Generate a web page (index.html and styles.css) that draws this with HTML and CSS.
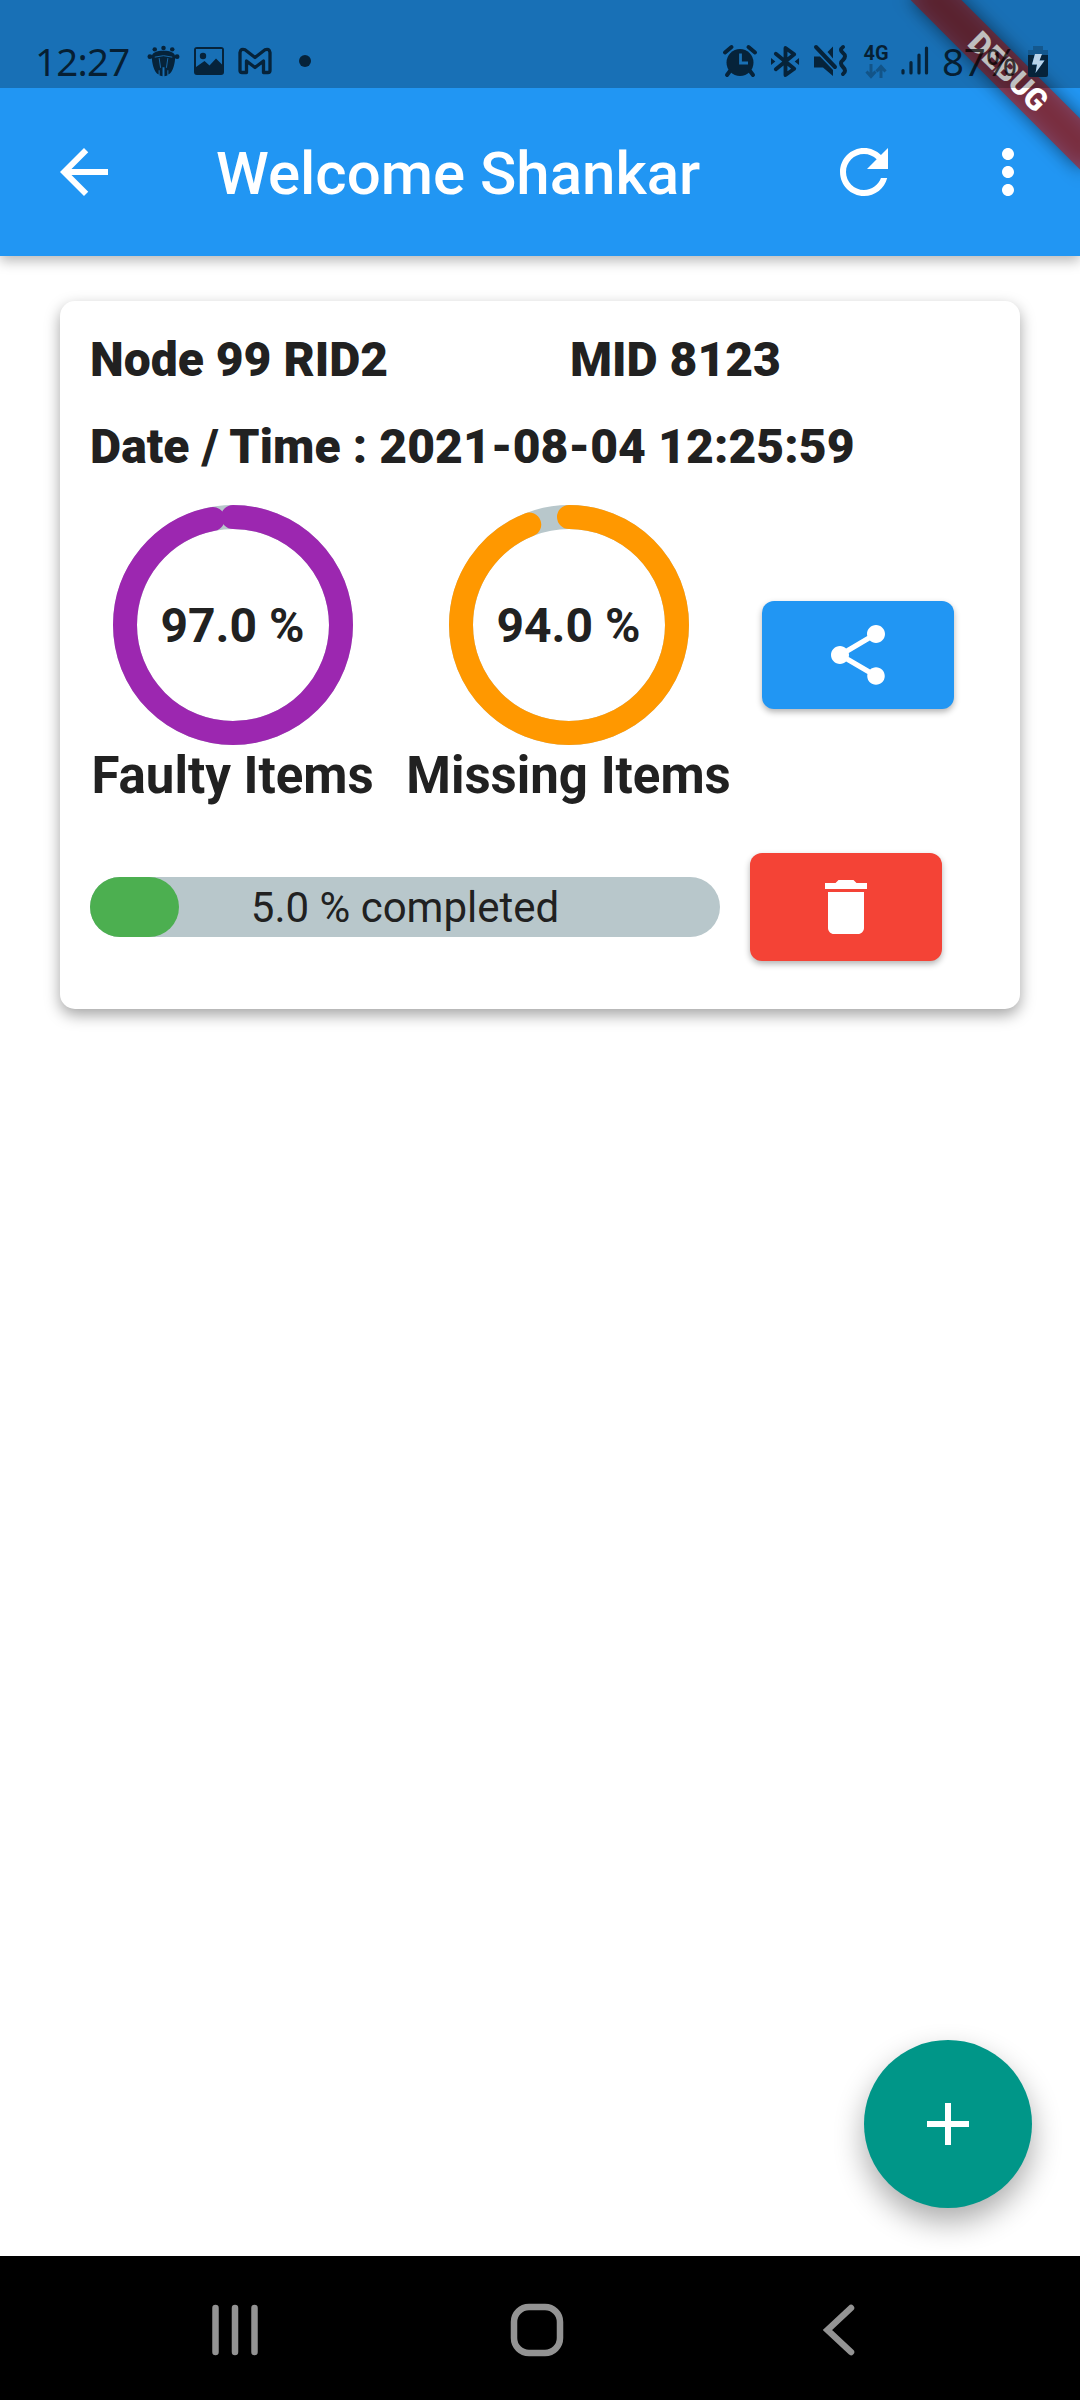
FILE: index.html
```html
<!DOCTYPE html>
<html lang="en">
<head>
<meta charset="utf-8">
<title>Welcome Shankar</title>
<link rel="stylesheet" href="styles.css">
</head>
<body>
<div class="screen">
  <header class="app-bar">
    <svg class="icon back" viewBox="0 0 24 24"><path d="M20 11H7.83l5.59-5.59L12 4l-8 8 8 8 1.41-1.41L7.83 13H20v-2z"/></svg>
    <h1 class="title">Welcome Shankar</h1>
    <svg class="icon" viewBox="0 0 24 24"><path d="M17.65 6.35C16.2 4.9 14.21 4 12 4c-4.42 0-7.99 3.58-7.99 8s3.57 8 7.99 8c3.73 0 6.84-2.55 7.73-6h-2.08c-.82 2.33-3.04 4-5.65 4-3.31 0-6-2.69-6-6s2.69-6 6-6c1.66 0 3.14.69 4.22 1.78L13 11h7V4l-2.35 2.35z"/></svg>
    <svg class="icon" viewBox="0 0 24 24"><path d="M12 8c1.1 0 2-.9 2-2s-.9-2-2-2-2 .9-2 2 .9 2 2 2zm0 2c-1.1 0-2 .9-2 2s.9 2 2 2 2-.9 2-2-.9-2-2-2zm0 6c-1.1 0-2 .9-2 2s.9 2 2 2 2-.9 2-2-.9-2-2-2z"/></svg>
  </header>

  <main class="content">
    <section class="card">
      <div class="ids">
        <span>Node 99 RID2</span>
        <span>MID 8123</span>
      </div>
      <div class="date">Date / Time : 2021-08-04 12:25:59</div>
      <div class="gauges">
        <div class="gauge gauge-faulty">
          <div class="dial">
            <svg class="ring" viewBox="0 0 240 240">
              <circle class="track" cx="120" cy="120" r="108"/>
              <circle class="value" cx="120" cy="120" r="108" pathLength="100" stroke-dasharray="97 100" transform="rotate(-90 120 120)"/>
            </svg>
            <span class="percent">97.0 %</span>
          </div>
          <span class="label">Faulty Items</span>
        </div>
        <div class="gauge gauge-missing">
          <div class="dial">
            <svg class="ring" viewBox="0 0 240 240">
              <circle class="track" cx="120" cy="120" r="108"/>
              <circle class="value" cx="120" cy="120" r="108" pathLength="100" stroke-dasharray="94 100" transform="rotate(-90 120 120)"/>
            </svg>
            <span class="percent">94.0 %</span>
          </div>
          <span class="label">Missing Items</span>
        </div>
        <button class="button share"><svg class="icon" viewBox="0 0 24 24"><path d="M18 16.08c-.76 0-1.44.3-1.96.77L8.91 12.7c.05-.23.09-.46.09-.7s-.04-.47-.09-.7l7.05-4.11c.54.5 1.25.81 2.04.81 1.66 0 3-1.34 3-3s-1.34-3-3-3-3 1.34-3 3c0 .24.04.47.09.7L8.04 9.81C7.5 9.31 6.79 9 6 9c-1.66 0-3 1.34-3 3s1.34 3 3 3c.79 0 1.5-.31 2.04-.81l7.12 4.16c-.05.21-.08.43-.08.65 0 1.61 1.31 2.92 2.92 2.92 1.61 0 2.92-1.31 2.92-2.92s-1.31-2.92-2.92-2.92z"/></svg></button>
      </div>
      <div class="completion">
        <div class="progress"><span class="fill"></span><span class="progress-text">5.0 % completed</span></div>
        <button class="button delete"><svg class="icon" viewBox="0 0 24 24"><path d="M6 19c0 1.1.9 2 2 2h8c1.1 0 2-.9 2-2V7H6v12zM19 4h-3.5l-1-1h-5l-1 1H5v2h14V4z"/></svg></button>
      </div>
    </section>
    <button class="fab"><svg class="icon" viewBox="0 0 24 24"><path d="M19 13h-6v6h-2v-6H5v-2h6V5h2v6h6v2z"/></svg></button>
  </main>

  <nav class="nav-bar">
    <svg viewBox="0 0 60 60"><path d="M10.5 8v44M30 8v44M49.5 8v44"/></svg>
    <svg viewBox="0 0 60 60"><rect x="6" y="7" width="46" height="46" rx="15"/></svg>
    <svg viewBox="0 0 60 60"><path d="M41 8L17.500 30 41 52"/></svg>
  </nav>

  <div class="debug"><span>DEBUG</span></div>

  <div class="status-bar">
    <span class="clock">12:27</span>
    <svg class="st paw" viewBox="0 0 34 34">
      <circle cx="8" cy="4.500" r="2.300"/><circle cx="17" cy="3" r="2.300"/><circle cx="26" cy="4.500" r="2.300"/>
      <circle cx="3" cy="12" r="2.500"/><circle cx="31" cy="12" r="2.500"/>
      <path d="M5 12C5 8 10 6 17 6s12 2 12 6c0 6-2 16-7 18.500V26h-1v5.500l-3 .800V23h-2v9.300l-3-.800V26h-1v4.500C7 28 5 18 5 12z"/>
      <path class="slit" d="M8 12.500q9-3 18 0M12.500 13.500l1.500 10M21.500 13.500L20 23.500"/>
    </svg>
    <svg class="st picture" viewBox="0 0 30 30"><path fill-rule="evenodd" d="M3 1h24a3 3 0 013 3v22a3 3 0 01-3 3H3a3 3 0 01-3-3V4a3 3 0 013-3zm-1 2v18l8.500-6 5 4.500 6.500-7 6 6V3z"/><circle cx="9" cy="10" r="3.200"/></svg>
    <svg class="st mail" viewBox="0 0 34 28"><path d="M2 5.500V23.500q0 2 2 2H8.500V14L17 20.500 25.500 14V25.500H30q2 0 2-2V5.500Q31 1 27 2.800L17 10.500 7 2.800Q3 1 2 5.500z"/></svg>
    <span class="dot"></span>
    <span class="spring"></span>
    <svg class="st alarm" viewBox="0 0 34 32"><circle cx="17" cy="17.500" r="13.500"/><path class="line" d="M2 7.500L8.500 2M32 7.500L25.500 2M7 26l-3 4M27 26l3 4"/><path class="hands" d="M17.500 8.500V18H25"/></svg>
    <svg class="st bluetooth" viewBox="0 0 30 32"><path class="line" d="M5 8L24 23.500 15 30V2l9 6.500L5 24"/><path d="M0 12.500L4.500 16 0 19.500zM29 12.500L24.500 16 29 19.500z"/></svg>
    <svg class="st mute" viewBox="0 0 34 32"><path d="M1 11.500h6L20 25v6L10 22.500H1zM14.500 7L20 1.500v12z"/><path class="line" d="M3 2l19 20M30 2q-4 3 0 6t0 7q-4 3 0 7t0 7"/></svg>
    <span class="network"><b>4G</b><svg viewBox="0 0 22 15"><path d="M6 0v12M1.500 7.500L6 12.500l4.500-5M16 14V3M11.500 7.500L16 2.500l4.500 5"/></svg></span>
    <svg class="st signal" viewBox="0 0 28 30"><path class="line" d="M2 24.500V27M10 16.500V27M18 9V27M25.500 2V27"/></svg>
    <span class="battery-level">87%</span>
    <svg class="st battery" viewBox="0 0 20 31"><path class="cap" d="M5 0h10v4h5v5H0V4h5z"/><path fill-rule="evenodd" d="M0 9h6.500L4 18.500h5L7.500 27 16.500 14.500H11.500L13 9H20v20q0 2-2 2H2q-2 0-2-2z"/><path class="bolt" d="M7 8h7l-2.500 6.500h5L7.500 27 9 18.500H4z"/></svg>
  </div>
</div>
</body>
</html>
```
FILE: styles.css
```css
* { box-sizing: border-box; }

body {
  margin: 0;
  font-family: Roboto, "Noto Sans", sans-serif;
  color: #212121;
}

.screen {
  position: relative;
  width: 1080px;
  height: 2400px;
  display: flex;
  flex-direction: column;
  overflow: hidden;
  background: #fff;
}

.icon { width: 72px; height: 72px; display: block; flex: none; fill: #fff; }

/* App bar */
.app-bar {
  position: relative;
  flex: none;
  height: 256px;
  padding: 88px 36px 0 48px;
  display: flex;
  align-items: center;
  gap: 72px;
  background: #2196f3;
  box-shadow: 0 5px 12px rgba(0, 0, 0, .28);
}
.title {
  flex: 1;
  margin: 0 0 0 24px;
  padding-top: 3px;
  font-size: 60px;
  font-weight: 500;
  line-height: 70px;
  color: #fff;
  white-space: nowrap;
}

.content {
  flex: 1;
  padding: 45px 48px 48px 60px;
  display: flex;
  flex-direction: column;
  justify-content: space-between;
}

/* Node card */
.card {
  width: 960px;
  height: 708px;
  padding: 30px;
  display: flex;
  flex-direction: column;
  gap: 30px;
  border-radius: 15px;
  background: #fff;
  box-shadow: 0 6px 15px rgba(0, 0, 0, .36);
}
.ids, .date { height: 57px; font-size: 48px; line-height: 57px; font-weight: 900; white-space: nowrap; }
.date { letter-spacing: .1px; }
.ids { display: grid; grid-template-columns: 480px 1fr; }
.gauges { display: flex; align-items: center; gap: 30px; height: 300px; }
.gauge { display: flex; flex-direction: column; align-items: center; }
.gauge-faulty { width: 285px; }
.gauge-missing { width: 327px; }
.dial { display: grid; place-items: center; }
.dial > * { grid-area: 1 / 1; }
.ring { width: 240px; height: 240px; display: block; fill: none; stroke-width: 24; }
.track { stroke: #b8c7cb; }
.value { stroke-linecap: round; }
.gauge-faulty .value { stroke: #9c27b0; }
.gauge-missing .value { stroke: #ff9800; }
.percent { padding-top: 2px; font-size: 48px; font-weight: 700; line-height: 56px; }
.label { padding-top: 1px; font-size: 51px; font-weight: 700; line-height: 59px; white-space: nowrap; }

.button {
  width: 192px;
  height: 108px;
  padding: 0;
  border: 0;
  border-radius: 12px;
  display: grid;
  place-items: center;
  flex: none;
  box-shadow: 0 3px 6px rgba(0, 0, 0, .3);
}
.share { background: #2196f3; }
.delete { background: #f44336; }

.completion { display: flex; align-items: center; gap: 30px; height: 144px; }
.progress {
  width: 630px;
  height: 60px;
  display: grid;
  align-items: center;
  border-radius: 30px;
  background: #b8c7cb;
}
.progress > * { grid-area: 1 / 1; }
.fill { width: 89px; height: 60px; border-radius: 30px; background: #4caf50; }
.progress-text { padding-top: 1px; text-align: center; font-size: 42px; line-height: 50px; }

.fab {
  width: 168px;
  height: 168px;
  padding: 0;
  border: 0;
  border-radius: 50%;
  align-self: flex-end;
  display: grid;
  place-items: center;
  background: #009688;
  box-shadow: 0 14px 30px rgba(0, 0, 0, .33);
}

/* System navigation */
.nav-bar {
  position: relative;
  flex: none;
  height: 144px;
  padding: 4px 210px 0 205px;
  display: flex;
  justify-content: space-between;
  align-items: center;
  background: #000;
}
.nav-bar svg { width: 60px; height: 60px; fill: none; stroke: #939393; stroke-width: 6.500; stroke-linecap: round; }

/* Corner ribbon */
.debug {
  position: absolute;
  left: 887.900px;
  top: 54.100px;
  width: 240px;
  height: 36px;
  transform: rotate(45deg);
  text-align: center;
  font-size: 30.600px;
  font-weight: 900;
  line-height: 36px;
  color: #fff;
}
.debug::before, .debug::after { content: ""; position: absolute; inset: 0; z-index: -1; }
.debug::before { background: rgba(0, 0, 0, .5); filter: blur(9px); }
.debug::after { background: rgba(183, 28, 28, .627); }

/* System status */
.status-bar {
  position: absolute;
  inset: 0 0 auto 0;
  height: 88px;
  padding: 34px 32px 0 35px;
  display: flex;
  align-items: center;
  background: rgba(0, 0, 0, .25);
  font-family: "Noto Sans", sans-serif;
  font-size: 38.500px;
  line-height: 52px;
  color: rgba(0, 0, 0, .72);
}
.st { flex: none; fill: #06233a; overflow: visible; }
.st .line { fill: none; stroke: #06233a; stroke-width: 4; stroke-linecap: round; stroke-linejoin: round; }
.spring { flex: 1; }
.clock { width: 112px; letter-spacing: -.800px; }
.paw { width: 33px; height: 33px; }
.slit, .hands { fill: none; stroke: #1970b5; stroke-width: .9; }
.hands { stroke-width: 2.800; }
.picture { width: 30px; height: 30px; margin-left: 14px; }
.mail { width: 34px; height: 28px; margin-left: 14px; }
.mail path { fill: none; stroke: #06233a; stroke-width: 3.300; stroke-linejoin: round; }
.dot { width: 12px; height: 12px; margin-left: 27px; border-radius: 50%; background: #06233a; }
.alarm { width: 34px; height: 32px; }
.bluetooth { width: 29px; height: 31px; margin-left: 14px; }
.mute { width: 34px; height: 32px; margin-left: 13px; }
.network { width: 24px; margin-left: 17px; display: flex; flex-direction: column; align-items: center; }
.network b { font: 700 20px/20px Roboto, sans-serif; }
.network svg { width: 22px; height: 15px; fill: none; stroke: #125488; stroke-width: 3; margin-top: 1px; }
.signal { width: 28px; height: 30px; margin-left: 13px; }
.signal .line { stroke-width: 3.200; }
.battery-level { width: 79px; margin-left: 13px; letter-spacing: -.3px; }
.battery { width: 20px; height: 31px; margin-left: 7px; }
.cap { fill: #14588e; }
.bolt { fill: #b9d3e9; }
```
